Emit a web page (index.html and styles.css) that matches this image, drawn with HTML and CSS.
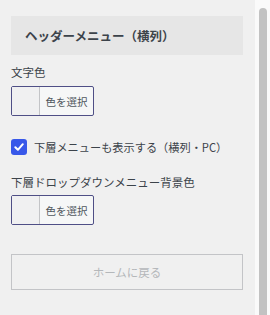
FILE: index.html
```html
<!DOCTYPE html>
<html lang="ja">
<head>
<meta charset="utf-8">
<link rel="stylesheet" href="styles.css">
</head>
<body>
<div class="page">
  <div class="panel">
    <div class="section-head">ヘッダーメニュー（横列）</div>
    <div class="label first">文字色</div>
    <div class="color-btn">
      <span class="swatch"></span>
      <span class="color-text">色を選択</span>
    </div>
    <label class="check-row">
      <span class="checkbox">
        <svg width="12" height="12" viewBox="0 0 12 12"><path d="M2.3 6.2 L4.9 8.8 L9.8 3.2" fill="none" stroke="#fff" stroke-width="2" stroke-linecap="round" stroke-linejoin="round"/></svg>
      </span>
      <span class="check-text">下層メニューも表示する（横列・PC）</span>
    </label>
    <div class="label second">下層ドロップダウンメニュー背景色</div>
    <div class="color-btn">
      <span class="swatch"></span>
      <span class="color-text">色を選択</span>
    </div>
    <div class="home-btn">ホームに戻る</div>
  </div>
  <div class="scrollbar"><div class="thumb"></div></div>
</div>
</body>
</html>
```
FILE: styles.css
```css
html, body {
  margin: 0;
  padding: 0;
  height: 100%;
  background: #f0f0f0;
}
body {
  font-family: "Noto Sans CJK JP", "Noto Sans", sans-serif;
  color: #3c434a;
  overflow: hidden;
}
.page {
  display: flex;
  height: 315px;
}
.panel {
  width: 232px;
  padding: 16px 12px 0 11px;
  display: flex;
  flex-direction: column;
}
.section-head {
  height: 39px;
  background: #e6e6e6;
  padding-left: 14px;
  display: flex;
  align-items: center;
  font-size: 12.5px;
  font-weight: 700;
  color: #3c434a;
}
.label {
  font-size: 11.5px;
  line-height: 17px;
  color: #3c434a;
}
.label.first {
  margin-top: 9px;
  margin-bottom: 5px;
}
.label.second {
  margin-top: 19px;
  margin-bottom: 4px;
}
.color-btn {
  width: 81px;
  height: 28px;
  border: 1px solid #4f4f86;
  border-radius: 2px;
  display: flex;
  background: #f6f7f7;
  box-sizing: content-box;
}
.swatch {
  width: 27px;
  border-right: 1px solid #c3c4c7;
  background: #f0f0f1;
}
.color-text {
  flex: 1;
  display: flex;
  align-items: center;
  justify-content: center;
  font-size: 10.5px;
  color: #50575e;
}
.check-row {
  margin-top: 22px;
  height: 17px;
  display: flex;
  align-items: center;
  gap: 7px;
}
.checkbox {
  width: 16px;
  height: 16px;
  border-radius: 3px;
  background: #3858e9;
  display: flex;
  align-items: center;
  justify-content: center;
}
.check-text {
  font-size: 11.2px;
  color: #3c434a;
}
.home-btn {
  margin-top: 29px;
  height: 34px;
  border: 1px solid #c3c4c7;
  display: flex;
  align-items: center;
  justify-content: center;
  font-size: 11.5px;
  color: #b4b7ba;
}
.scrollbar {
  width: 15px;
  margin-left: auto;
  background: #fafafa;
  padding-top: 8px;
  box-sizing: border-box;
  display: flex;
  justify-content: center;
}
.thumb {
  width: 8px;
  height: 320px;
  background: #c2c2c2;
  border-radius: 4px 4px 0 0;
}
```
